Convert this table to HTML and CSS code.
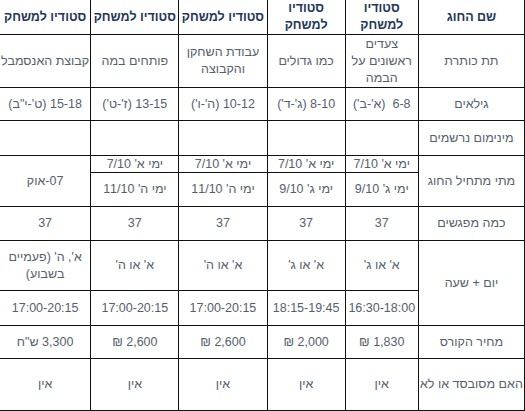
FILE: index.html
```html
<!DOCTYPE html>
<html lang="he" dir="rtl">
<head>
<meta charset="utf-8">
<title>טבלת חוגים</title>
<link rel="stylesheet" href="styles.css">
</head>
<body>
<table class="courses">
  <colgroup>
    <col class="c-label">
    <col class="c-1">
    <col class="c-2">
    <col class="c-3">
    <col class="c-4">
    <col class="c-5">
  </colgroup>
  <tr class="r-head">
    <th>שם החוג</th>
    <th>סטודיו למשחק</th>
    <th>סטודיו למשחק</th>
    <th>סטודיו למשחק</th>
    <th>סטודיו למשחק</th>
    <th>סטודיו למשחק</th>
  </tr>
  <tr class="r-sub">
    <td>תת כותרת</td>
    <td>צעדים ראשונים על הבמה</td>
    <td>כמו גדולים</td>
    <td>עבודת השחקן והקבוצה</td>
    <td>פותחים במה</td>
    <td>קבוצת האנסמבל</td>
  </tr>
  <tr class="r-age">
    <td>גילאים</td>
    <td>6-8 &nbsp;(א'-ב')</td>
    <td>8-10 (ג'-ד')</td>
    <td>10-12 (ה'-ו')</td>
    <td>13-15 (ז'-ט')</td>
    <td>15-18 (ט'-י"ב)</td>
  </tr>
  <tr class="r-min">
    <td>מינימום נרשמים</td>
    <td></td>
    <td></td>
    <td></td>
    <td></td>
    <td></td>
  </tr>
  <tr class="r-start1">
    <td rowspan="2">מתי מתחיל החוג</td>
    <td>ימי א' 7/10</td>
    <td>ימי א' 7/10</td>
    <td>ימי א' 7/10</td>
    <td>ימי א' 7/10</td>
    <td rowspan="2">07-אוק</td>
  </tr>
  <tr class="r-start2">
    <td>ימי ג' 9/10</td>
    <td>ימי ג' 9/10</td>
    <td>ימי ה' 11/10</td>
    <td>ימי ה' 11/10</td>
  </tr>
  <tr class="r-count">
    <td>כמה מפגשים</td>
    <td>37</td>
    <td>37</td>
    <td>37</td>
    <td>37</td>
    <td>37</td>
  </tr>
  <tr class="r-day">
    <td rowspan="2">יום + שעה</td>
    <td>א' או ג'</td>
    <td>א' או ג'</td>
    <td>א' או ה'</td>
    <td>א' או ה'</td>
    <td>א', ה' (פעמיים בשבוע)</td>
  </tr>
  <tr class="r-time">
    <td>16:30-18:00</td>
    <td>18:15-19:45</td>
    <td>17:00-20:15</td>
    <td>17:00-20:15</td>
    <td>17:00-20:15</td>
  </tr>
  <tr class="r-price">
    <td>מחיר הקורס</td>
    <td>1,830 ₪</td>
    <td>2,000 ₪</td>
    <td>2,600 ₪</td>
    <td>2,600 ₪</td>
    <td>3,300 ש"ח</td>
  </tr>
  <tr class="r-subsid">
    <td>האם מסובסד או לא</td>
    <td>אין</td>
    <td>אין</td>
    <td>אין</td>
    <td>אין</td>
    <td>אין</td>
  </tr>
</table>
</body>
</html>
```

FILE: styles.css
```css
html, body {
  margin: 0;
  padding: 0;
  background: #ffffff;
}

body {
  overflow: hidden;
}

.courses {
  direction: rtl;
  border-collapse: collapse;
  table-layout: fixed;
  width: 526px;
  margin: -1px 0 0 1px;
  font-family: "Liberation Sans", Arial, "DejaVu Sans", sans-serif;
  font-size: 12.5px;
  line-height: 17px;
  color: #55606e;
}

.c-label { width: 106px; }
.c-1 { width: 73px; }
.c-2 { width: 78px; }
.c-3 { width: 88px; }
.c-4 { width: 88px; }
.c-5 { width: 91px; }

.courses th,
.courses td {
  border: 1px solid #111111;
  padding: 0 1px;
  text-align: center;
  vertical-align: middle;
  overflow: hidden;
}

.courses th {
  font-weight: bold;
  color: #24365a;
}

.r-head { height: 35px; }
.r-sub { height: 53px; }
.r-age { height: 33px; }
.r-min { height: 35px; }
.r-start1 { height: 17px; }
.r-start1 td { line-height: 15px; }
.r-start2 { height: 34px; }
.r-count { height: 34px; }
.r-day { height: 50px; }
.r-time { height: 35px; }
.r-price { height: 33px; }
.r-subsid { height: 52px; }
```
